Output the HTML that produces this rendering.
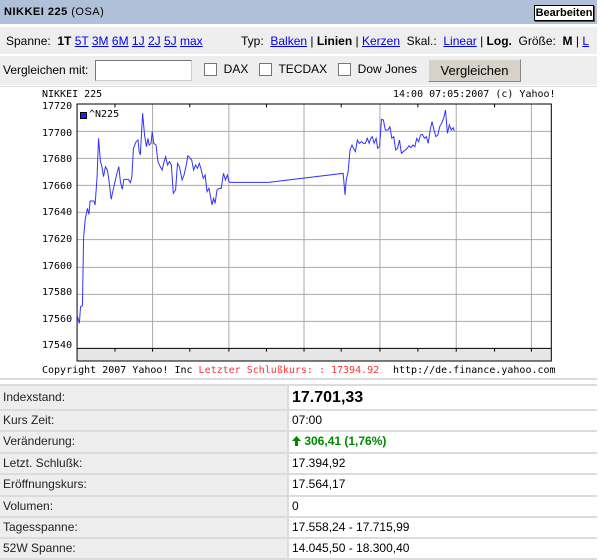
<!DOCTYPE html>
<html><head><meta charset="utf-8"><style>
*{margin:0;padding:0;box-sizing:border-box}
body{width:600px;height:560px;background:#fff;font-family:"Liberation Sans",Arial,sans-serif;font-size:12px;color:#000;position:relative;overflow:hidden}
.abs{position:absolute}
a{color:#0000ee;text-decoration:underline}
.hdr{left:0;top:0;width:597px;height:24px;background:#b0c0d9}
.row{left:0;width:597px;background:#eeeeee}
.mono{font-family:"DejaVu Sans Mono","Liberation Mono",monospace;font-size:10px;white-space:nowrap}
.cb{display:inline-block;width:13px;height:13px;border:1px solid #777;background:#fff;vertical-align:middle}
.r1{position:absolute;left:0;width:597px;border-top:2px solid #dcdcdc;font-size:12px;line-height:19px}
.r1 .l{position:absolute;left:0;top:0;width:287px;height:100%;background:#eee;color:#222;padding-left:3px}
.r1 .r{position:absolute;left:287px;top:0;width:310px;height:100%;border-left:2px solid #dcdcdc;padding-left:3px}
</style></head><body>
<div class="abs hdr"></div>
<div class="abs" style="left:4px;top:6px;font-size:11px;font-weight:bold;letter-spacing:0.5px">NIKKEI 225 <span style="font-weight:normal">(OSA)</span></div>
<div class="abs" style="left:534px;top:5px;width:60px;height:16px;border:1px solid #000;background:#fff;font-size:11px;font-weight:bold;text-align:center;line-height:14px;box-shadow:1px 1px 0 #555">Bearbeiten</div>

<div class="abs row" style="top:27px;height:27px"></div>
<div class="abs" style="left:6px;top:34px;white-space:nowrap">Spanne:&nbsp; <b>1T</b> <a>5T</a> <a>3M</a> <a>6M</a> <a>1J</a> <a>2J</a> <a>5J</a> <a>max</a></div>
<div class="abs" style="left:241px;top:34px;white-space:nowrap">Typ:&nbsp; <a>Balken</a> | <b>Linien</b> | <a>Kerzen</a>&nbsp; Skal.:&nbsp; <a>Linear</a> | <b>Log.</b>&nbsp; Größe:&nbsp; <b>M</b> | <a>L</a></div>

<div class="abs row" style="top:56px;height:29px"></div>
<div class="abs" style="left:3px;top:63px">Vergleichen mit:</div>
<div class="abs" style="left:95px;top:60px;width:97px;height:21px;background:#fff;border:1px solid #777;border-right-color:#ccc;border-bottom-color:#ccc"></div>
<div class="abs" style="left:204px;top:62px"><span class="cb"></span>&nbsp; DAX</div>
<div class="abs" style="left:259px;top:62px"><span class="cb"></span>&nbsp; TECDAX</div>
<div class="abs" style="left:338px;top:62px"><span class="cb"></span>&nbsp; Dow Jones</div>
<div class="abs" style="left:428px;top:59px;width:93px;height:23px;background:#d6d2ca;border:1px solid #888;border-top-color:#eee;border-left-color:#eee;font-size:13px;text-align:center;line-height:21px">Vergleichen</div>

<div class="abs" style="left:0;top:86px;width:597px;height:294px;border-bottom:2px solid #dcdcdc;border-top:1px solid #ddd"></div>
<div class="abs mono" style="left:42px;top:89px">NIKKEI 225</div>
<div class="abs mono" style="left:393px;top:89px">14:00 07:05:2007 (c) Yahoo!</div>
<div class="abs mono" style="left:42px;top:365px">Copyright 2007 Yahoo! Inc <span style="color:#f33">Letzter Schlußkurs: : 17394.92</span></div>
<div class="abs mono" style="left:393px;top:365px">http://de.finance.yahoo.com</div>
<div class="abs mono" style="left:42px;top:94px;line-height:26.6px">17720<br>17700<br>17680<br>17660<br>17640<br>17620<br>17600<br>17580<br>17560<br>17540</div>
<div class="abs mono" style="left:146px;top:348px">10</div>
<div class="abs mono" style="left:298px;top:348px">12</div>
<div class="abs mono" style="left:450px;top:348px">14</div>
<div class="abs" style="left:80px;top:112px;width:7px;height:7px;background:#2222ee;border:1px solid #000"></div>
<div class="abs mono" style="left:89px;top:109px">^N225</div>
<svg class="abs" style="left:0;top:85px" width="600" height="300" viewBox="0 0 1565 900" preserveAspectRatio="none">
<g stroke="#aaa" fill="none">
<path vector-effect="non-scaling-stroke" d="M201 139H1438M201 220H1438M201 301H1438M201 382H1438M201 464H1438M201 547H1438M201 628H1438M201 709H1438M398 57V790M597 57V790M793 57V790M991 57V790M1190 57V790M1386 57V790"/>
</g>
<rect x="201" y="790" width="1237" height="38" fill="#e6e6e6"/>
<path vector-effect="non-scaling-stroke" stroke="#000" fill="none" d="M201 57H1438V828H201ZM201 790H1438M300 57V67M495 57V67M695 57V67M890 57V67M1090 57V67M1290 57V67M300 790V800M495 790V800M695 790V800M890 790V800M1090 790V800M1290 790V800M398 790V800M597 790V800M793 790V800M991 790V800M1190 790V800M1386 790V800"/>
<polyline vector-effect="non-scaling-stroke" stroke="#3333ff" fill="none" points="201,690 207,715 210,665 215,662 218,460 222,405 228,370 232,388 235,348 245,348 248,360 253,280 257,160 262,230 266,245 270,275 275,245 280,255 284,285 290,343 296,310 300,290 305,265 310,245 314,290 319,313 323,283 335,283 340,293 344,275 348,190 355,170 360,165 363,200 366,210 372,85 377,150 382,185 386,160 389,180 394,175 397,140 401,175 407,180 412,230 418,245 423,255 428,230 432,215 437,240 442,230 447,240 452,325 458,315 463,235 468,245 475,285 480,270 485,245 490,212 495,218 500,225 505,255 510,240 515,250 520,235 525,255 530,280 535,270 540,320 545,310 550,340 553,360 557,340 561,355 566,315 572,310 577,310 583,265 588,285 593,270 597,290 600,292 700,292 895,265 900,330 903,285 908,260 913,195 918,180 922,190 927,200 932,165 937,175 943,170 948,175 953,175 958,160 963,175 967,160 971,155 976,175 981,160 985,190 990,185 995,103 1000,105 1005,135 1012,135 1017,125 1022,160 1027,155 1032,195 1037,190 1042,165 1047,205 1052,200 1057,195 1062,190 1067,182 1072,188 1077,180 1082,185 1087,160 1092,170 1097,150 1102,148 1107,160 1112,155 1117,175 1122,135 1127,110 1132,135 1137,155 1142,150 1147,125 1152,115 1157,100 1162,75 1167,145 1172,120 1177,135 1182,128 1185,138"/>
</svg>

<div class="r1" style="top:384px;height:25px;line-height:23px"><div class="l">Indexstand:</div><div class="r" style="font-size:16px;font-weight:bold">17.701,33</div></div>
<div class="r1" style="top:409px;height:21px"><div class="l">Kurs Zeit:</div><div class="r">07:00</div></div>
<div class="r1" style="top:430px;height:22px"><div class="l">Veränderung:</div><div class="r" style="color:#008800;font-weight:bold"><svg width="9" height="10" viewBox="0 0 9 10" style="vertical-align:-1px"><path d="M4.5 0L9 5H6V10H3V5H0Z" fill="#008800"/></svg> 306,41 (1,76%)</div></div>
<div class="r1" style="top:452px;height:21px"><div class="l">Letzt. Schlußk:</div><div class="r">17.394,92</div></div>
<div class="r1" style="top:473px;height:22px"><div class="l">Eröffnungskurs:</div><div class="r">17.564,17</div></div>
<div class="r1" style="top:495px;height:21px"><div class="l">Volumen:</div><div class="r">0</div></div>
<div class="r1" style="top:516px;height:21px"><div class="l">Tagesspanne:</div><div class="r">17.558,24 - 17.715,99</div></div>
<div class="r1" style="top:537px;height:23px;border-bottom:2px solid #dcdcdc"><div class="l">52W Spanne:</div><div class="r">14.045,50 - 18.300,40</div></div>
</body></html>
